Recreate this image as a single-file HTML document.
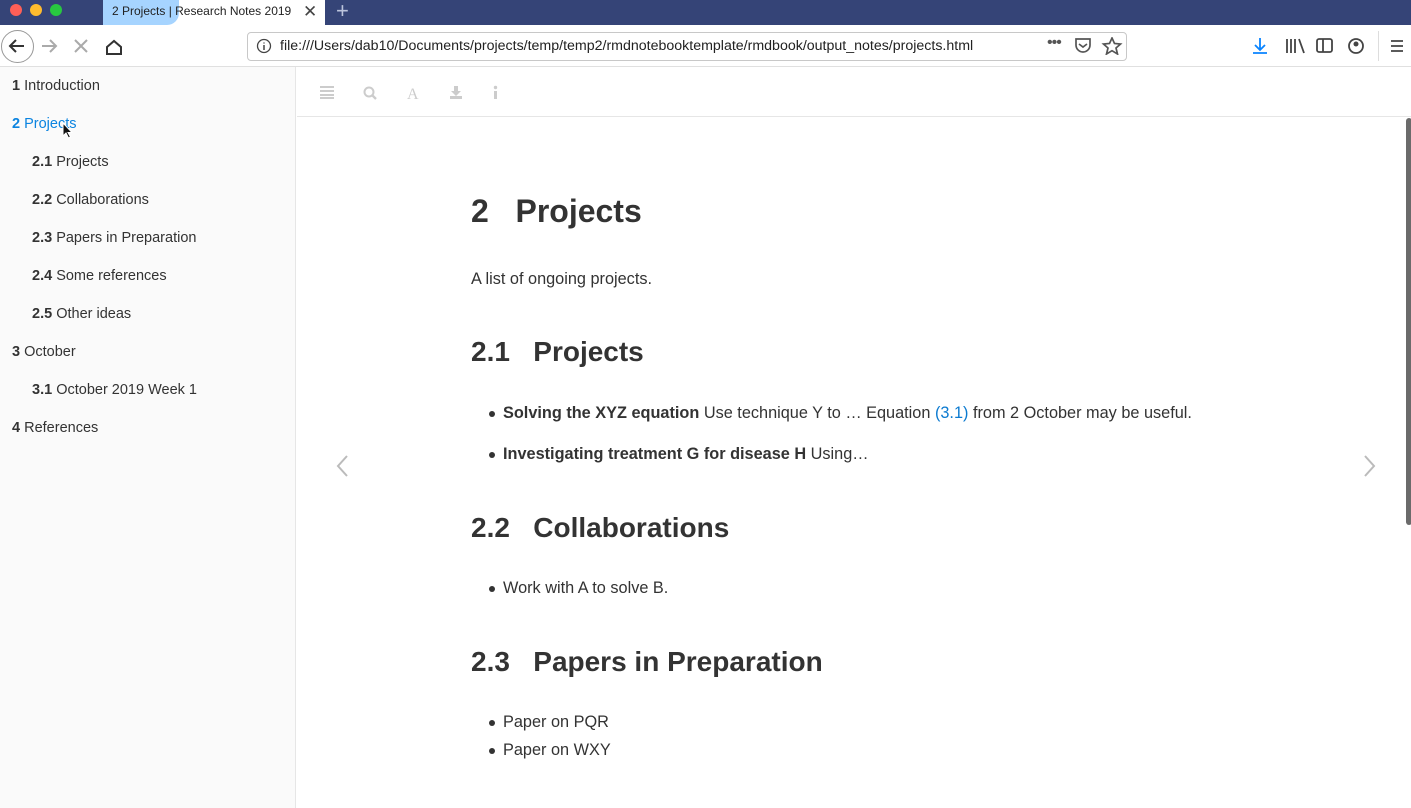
<!DOCTYPE html>
<html><head><meta charset="utf-8"><style>
*{margin:0;padding:0;box-sizing:border-box}
body{width:1411px;height:808px;overflow:hidden;font-family:"Liberation Sans",sans-serif;background:#fff;position:relative;color:#333}
.abs{position:absolute}
#title{left:0;top:0;width:1411px;height:25px;background:#354477}
.dot{width:12px;height:12px;border-radius:50%;top:4px}
#tab{left:103px;top:0;width:222px;height:25px;background:#fff;overflow:hidden}
#tabprog{left:0;top:0;width:76px;height:25px;background:#a6d4ff;border-radius:0 0 12px 0}
#tabt{left:9px;top:4px;font-size:12px;color:#222;white-space:nowrap}
#nav{left:0;top:25px;width:1411px;height:42px;background:#fff;border-bottom:1px solid #e0e0e0}
#url{left:247px;top:32px;width:880px;height:29px;border:1px solid #c8c8c8;border-radius:4px;background:#fff}
#urlt{left:280px;top:38px;font-size:14.2px;color:#222;white-space:nowrap}
#side{left:0;top:67px;width:296px;height:741px;background:#fafafa;border-right:1px solid #e6e6e6}
.si{position:absolute;font-size:14.5px;color:#333;white-space:nowrap}
.si b{font-weight:bold}
#bar{left:297px;top:67px;width:1114px;height:50px;border-bottom:1px solid #e6e6e6;background:#fff}
h1,h2{position:absolute;font-weight:bold;color:#333;white-space:nowrap}
h1{font-size:32px}
h2{font-size:28px}
p,.li{position:absolute;font-size:16.3px;white-space:nowrap}
.li::before{content:"";position:absolute;left:-14px;top:7px;width:6px;height:6px;border-radius:50%;background:#333}
a{color:#0b7ad0;text-decoration:none}
</style></head><body>
<div id="title" class="abs"></div>
<div class="abs dot" style="left:10px;background:#fe5f57"></div>
<div class="abs dot" style="left:30px;background:#febc2e"></div>
<div class="abs dot" style="left:50px;background:#28c840"></div>
<div id="tab" class="abs"><div id="tabprog" class="abs"></div><div id="tabt" class="abs">2 Projects | Research Notes 2019</div>
<div class="abs" style="left:200px;top:2px;font-size:17px;color:#444">✕</div></div>
<div class="abs" style="left:336px;top:-2px;font-size:22px;color:#bcc4dc">+</div>
<div id="nav" class="abs"></div>
<div class="abs" style="left:1px;top:30px;width:33px;height:33px;border:1px solid #999;border-radius:50%"></div>
<svg class="abs" style="left:0;top:25px" width="130" height="42"><g fill="none" stroke-width="2">
<path d="M24 21H10M16 15l-6 6 6 6" stroke="#333"/><path d="M42 21h14M50 15l6 6-6 6" stroke="#aaa"/>
<path d="M75 15l12 12M87 15L75 27" stroke="#aaa"/>
<path d="M107 22l7-6 7 6v7h-14z" stroke="#333"/></g></svg>
<div id="url" class="abs"></div>
<svg class="abs" style="left:256px;top:38px" width="16" height="16"><circle cx="8" cy="8" r="6.5" fill="none" stroke="#444" stroke-width="1.3"/><path d="M8 7v5M8 4.5v1" stroke="#444" stroke-width="1.5"/></svg>
<div id="urlt" class="abs">file:///Users/dab10/Documents/projects/temp/temp2/rmdnotebooktemplate/rmdbook/output_notes/projects.html</div>
<div class="abs" style="left:1047px;top:34px;font-size:16px;color:#555;letter-spacing:-1px">•••</div>
<svg class="abs" style="left:1074px;top:37px" width="60" height="18" fill="none" stroke="#555" stroke-width="1.7"><path d="M2 2h14v6a7 7 0 0 1-14 0z M5 7l4 3 4-3"/><path d="M38 1l2.5 5.5 6 .5-4.5 4 1.5 6-5.5-3.3-5.5 3.3 1.5-6-4.5-4 6-.5z"/></svg>
<svg class="abs" style="left:1250px;top:36px" width="160" height="20" fill="none" stroke-width="1.8">
<path d="M10 2v12M5 9l5 5 5-5M3 17h14" stroke="#0a84ff"/>
<path d="M37 3v14M41 3v14M45 3v14M49 3l5 14" stroke="#444"/>
<rect x="67" y="3" width="15" height="13" rx="2" stroke="#444"/><path d="M73 3v13" stroke="#444"/>
<circle cx="106" cy="10" r="7" stroke="#444"/><circle cx="106" cy="8" r="2.5" fill="#444"/>
<path d="M141 5h12M141 10h12M141 15h12" stroke="#444"/></svg>
<div class="abs" style="left:1378px;top:31px;width:1px;height:30px;background:#ddd"></div>

<div id="side" class="abs">
<div class="si" style="left:12px;top:11px"><b>1</b> Introduction</div>
<div class="si" style="left:12px;top:49px;color:#0b84e0"><b>2</b> Projects</div>
<div class="si" style="left:32px;top:87px"><b>2.1</b> Projects</div>
<div class="si" style="left:32px;top:125px"><b>2.2</b> Collaborations</div>
<div class="si" style="left:32px;top:163px"><b>2.3</b> Papers in Preparation</div>
<div class="si" style="left:32px;top:201px"><b>2.4</b> Some references</div>
<div class="si" style="left:32px;top:239px"><b>2.5</b> Other ideas</div>
<div class="si" style="left:12px;top:277px"><b>3</b> October</div>
<div class="si" style="left:32px;top:315px"><b>3.1</b> October 2019 Week 1</div>
<div class="si" style="left:12px;top:353px"><b>4</b> References</div>
</div>
<svg class="abs" style="left:62px;top:122px" width="12" height="18"><path d="M1 1v13l3-3 2.5 5 2-1-2.5-4.5h4z" fill="#111" stroke="#fff" stroke-width="1"/></svg>

<div id="bar" class="abs"></div>
<svg class="abs" style="left:318px;top:84px" width="190" height="18" fill="#ccc">
<rect x="2" y="2" width="14" height="2"/><rect x="2" y="6" width="14" height="2"/><rect x="2" y="10" width="14" height="2"/><rect x="2" y="13" width="14" height="2"/>
<circle cx="51" cy="8" r="4.5" fill="none" stroke="#ccc" stroke-width="2"/><path d="M54 11l4 4" stroke="#ccc" stroke-width="2.3"/>
<text x="89" y="15" font-family="Liberation Serif" font-size="16" fill="#ccc">A</text>
<path d="M136 2h4v5h3l-5 5-5-5h3z M132 12h12v3h-12z"/>
<rect x="176" y="7" width="3" height="8"/><circle cx="177.5" cy="3.5" r="1.7"/></svg>

<h1 style="left:471px;top:193px">2&nbsp;&nbsp;&nbsp;Projects</h1>
<p style="left:471px;top:270px">A list of ongoing projects.</p>
<h2 style="left:471px;top:336px">2.1&nbsp;&nbsp;&nbsp;Projects</h2>
<div class="li" style="left:503px;top:404px"><b>Solving the XYZ equation</b> Use technique Y to … Equation <a>(3.1)</a> from 2 October may be useful.</div>
<div class="li" style="left:503px;top:445px"><b>Investigating treatment G for disease H</b> Using…</div>
<h2 style="left:471px;top:512px">2.2&nbsp;&nbsp;&nbsp;Collaborations</h2>
<div class="li" style="left:503px;top:579px">Work with A to solve B.</div>
<h2 style="left:471px;top:646px">2.3&nbsp;&nbsp;&nbsp;Papers in Preparation</h2>
<div class="li" style="left:503px;top:713px">Paper on PQR</div>
<div class="li" style="left:503px;top:741px">Paper on WXY</div>

<svg class="abs" style="left:334px;top:454px" width="20" height="26"><path d="M13 2L4 12l9 10" fill="none" stroke="#bbb" stroke-width="2"/></svg>
<svg class="abs" style="left:1360px;top:454px" width="20" height="26"><path d="M5 2l9 10-9 10" fill="none" stroke="#bbb" stroke-width="2"/></svg>
<div class="abs" style="left:1406px;top:118px;width:6px;height:407px;background:#6b6b6b;border-radius:3px"></div>
</body></html>
